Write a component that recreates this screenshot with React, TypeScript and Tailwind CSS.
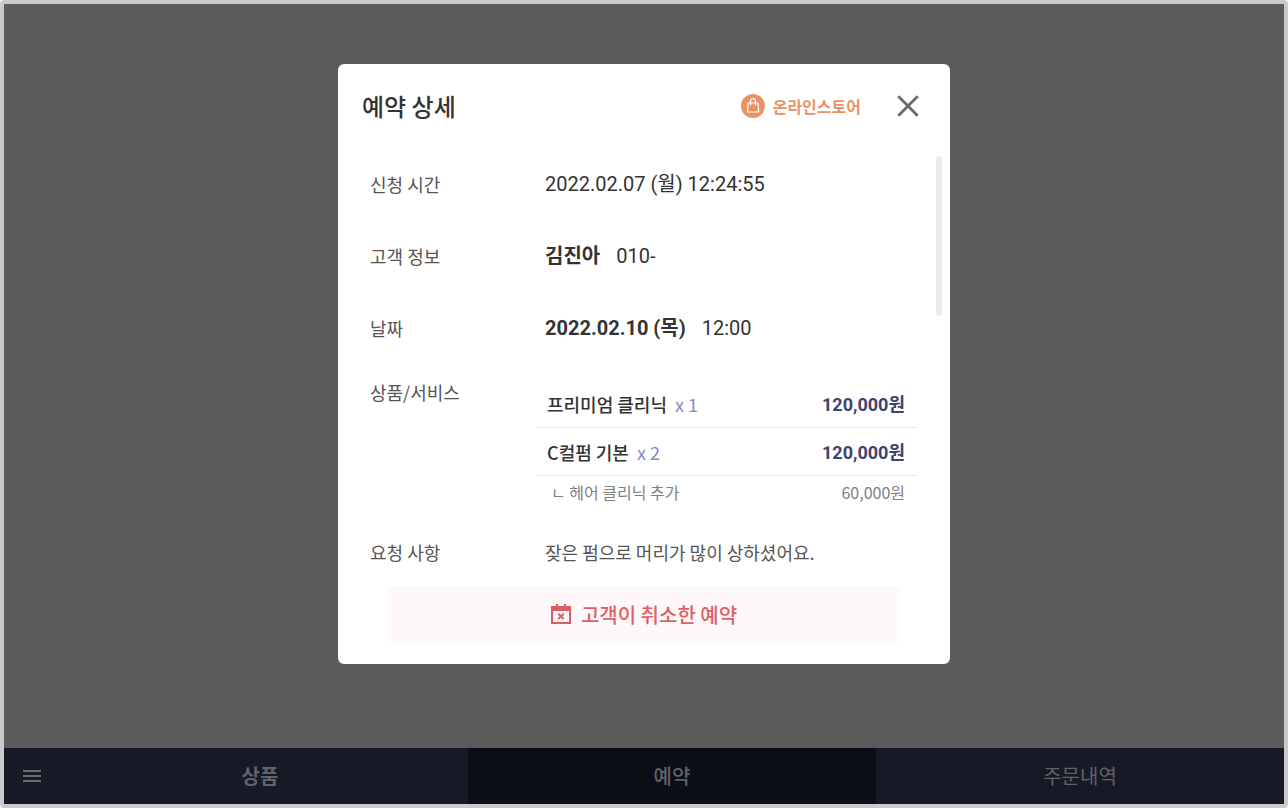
import type { ReactNode } from 'react';

const items = [
  { name: '프리미엄 클리닉', count: 1, price: '120,000원' },
  { name: 'C컬펌 기본', count: 2, price: '120,000원' },
];

function StoreIcon() {
  return (
    <svg viewBox="0 0 24 24" className="size-6" fill="none" aria-hidden="true">
      <circle cx="12" cy="12" r="12" fill="#e99365" />
      <path d="M7.2 9h9.8l.7 9H6.5z" stroke="#fff" strokeWidth="1.2" strokeLinejoin="round" />
      <path d="M9.5 11V7a2.5 2.5 0 0 1 5 0v4" stroke="#fff" strokeWidth="1.2" strokeLinecap="round" />
    </svg>
  );
}

function CloseIcon() {
  return (
    <svg viewBox="0 0 24 24" className="size-6" fill="none" stroke="#6a6a6a" strokeWidth="2.8" aria-hidden="true">
      <path d="M2.3 2.3l19.4 19.4M21.7 2.3L2.3 21.7" />
    </svg>
  );
}

function CanceledIcon() {
  return (
    <svg viewBox="0 0 20 20" className="mb-0.5 size-5" aria-hidden="true">
      <path
        fill="#e05c60"
        fillRule="evenodd"
        d="M5 0h2v2h6V0h2v2h5v18H0V2h5zM2 7v11h16V7z"
      />
      <path d="M7.2 9.6l5.6 5.4M12.8 9.6L7.2 15" stroke="#d9605c" strokeWidth="2" />
    </svg>
  );
}

function Row({ label, children }: { label: string; children: ReactNode }) {
  return (
    <div className="flex h-[72px] items-center">
      <dt className="w-[175px] shrink-0 text-lg/6 text-[#555]">{label}</dt>
      <dd className="flex items-baseline gap-4 font-[Roboto,'Noto_Sans_CJK_KR',sans-serif] text-xl text-[#333]">
        {children}
      </dd>
    </div>
  );
}

function ReservationDialog() {
  return (
    <section
      role="dialog"
      aria-labelledby="dialog-title"
      className="w-full max-w-[612px] rounded-md bg-white pb-5"
    >
      <header className="flex h-[84px] items-center px-6">
        <h1 id="dialog-title" className="flex-1 text-2xl font-medium text-[#333]">예약 상세</h1>
        <p className="flex items-center gap-2 font-bold text-[#e99365]">
          <StoreIcon />
          온라인스토어
        </p>
        <button type="button" aria-label="닫기" className="mr-1.5 ml-[35px] cursor-pointer">
          <CloseIcon />
        </button>
      </header>

      <div className="flex justify-between pr-2">
        <dl className="flex-1 pr-[19px] pl-8">
          <Row label="신청 시간">2022.02.07 (월) 12:24:55</Row>
          <Row label="고객 정보">
            <strong className="font-bold">김진아</strong>
            <span>010-</span>
          </Row>
          <Row label="날짜">
            <strong className="font-bold">2022.02.10 (목)</strong>
            <span>12:00</span>
          </Row>
          <div className="flex pt-4 pb-2.5">
            <dt className="w-[166px] shrink-0 text-lg/6 text-[#555]">상품/서비스</dt>
            <dd className="flex-1">
              <table className="w-full border-separate border-spacing-0 text-lg/6">
                <tbody>
                  {items.map((item) => (
                    <tr key={item.name} className="h-12">
                      <td className="border-b border-[#ebebeb] pl-[11px]">
                        <span className="mr-2 font-medium text-[#333]">{item.name}</span>
                        <span className="text-[#8488d0]">x {item.count}</span>
                      </td>
                      <td className="border-b border-[#ebebeb] pr-3 text-right font-bold text-[#404271]">
                        <span className="font-[Roboto,'Noto_Sans_CJK_KR',sans-serif]">{item.price}</span>
                      </td>
                    </tr>
                  ))}
                  <tr className="h-8 text-base/6 text-[#808080]">
                    <td className="pl-[15px]">ㄴ 헤어 클리닉 추가</td>
                    <td className="pr-3 text-right">60,000원</td>
                  </tr>
                </tbody>
              </table>
            </dd>
          </div>
          <div className="flex h-[68px] items-center text-lg/6 text-[#555]">
            <dt className="w-[175px] shrink-0">요청 사항</dt>
            <dd>잦은 펌으로 머리가 많이 상하셨어요.</dd>
          </div>
        </dl>
        <div className="mt-2 h-40 w-1.5 rounded-full bg-[#ebebeb]" />
      </div>

      <p className="mx-[50px] flex h-[58px] items-center justify-center gap-2.5 rounded-md bg-[#fff8fa] text-xl font-medium text-[#df6064]">
        <CanceledIcon />
        고객이 취소한 예약
      </p>
    </section>
  );
}

export default function App() {
  return (
    <div className="flex min-h-screen flex-col rounded-sm border-4 border-[#c9cbca] bg-[#5b5b5b] font-['Noto_Sans_CJK_KR',sans-serif]">
      <main className="flex flex-1 items-start justify-center pt-[60px] pb-6">
        <ReservationDialog />
      </main>
      <nav className="grid h-14 grid-cols-[464fr_408fr_408fr] text-xl text-[#626368]">
        <div className="flex bg-[#181927]">
          <button type="button" aria-label="메뉴" className="flex w-14 items-center justify-center">
            <svg viewBox="0 0 18 12" className="h-3 w-[18px]" fill="#6b6c6e" aria-hidden="true">
              <path d="M0 0h18v2H0zM0 5h18v2H0zM0 10h18v2H0z" />
            </svg>
          </button>
          <button type="button" className="flex-1 pr-2 font-bold">상품</button>
        </div>
        <button type="button" className="bg-[#0c0e17] font-medium">예약</button>
        <button type="button" className="bg-[#181927]">주문내역</button>
      </nav>
    </div>
  );
}
